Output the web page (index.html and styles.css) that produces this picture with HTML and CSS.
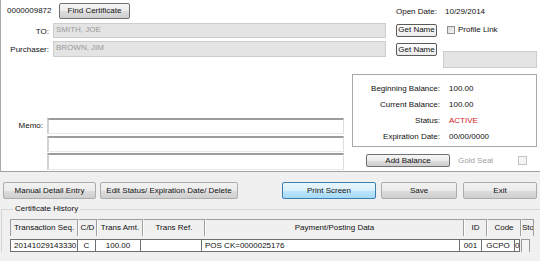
FILE: index.html
```html
<!DOCTYPE html>
<html>
<head>
<meta charset="utf-8">
<link rel="stylesheet" href="styles.css">
</head>
<body>
<div class="top">
  <div class="sec-a">
    <div class="left-a">
      <div class="row r1"><span class="certno">0000009872</span><button class="btn btn-find">Find Certificate</button></div>
      <div class="row r2"><span class="lbl">TO:</span><div class="dis">SMITH, JOE</div></div>
      <div class="row r3"><span class="lbl">Purchaser:</span><div class="dis">BROWN, JIM</div></div>
    </div>
    <div class="right-a">
      <div class="od-row"><span class="od-lbl">Open Date:</span><span>10/29/2014</span></div>
      <div class="gn-row"><button class="gn">Get Name</button><span class="chk"></span><span class="chk-lbl">Profile Link</span></div>
      <div class="gn-row2"><button class="gn">Get Name</button><div class="gray-in"></div></div>
    </div>
  </div>
  <div class="sec-b">
    <div class="memo">
      <span class="memo-lbl">Memo:</span>
      <div class="memo-ins">
        <div class="mi"></div>
        <div class="mi mi2"></div>
        <div class="mi mi3"></div>
      </div>
    </div>
    <div class="bal-col">
      <div class="bal-box">
        <div class="bal-row"><span class="bl">Beginning Balance:</span><span class="bv">100.00</span></div>
        <div class="bal-row"><span class="bl">Current Balance:</span><span class="bv">100.00</span></div>
        <div class="bal-row"><span class="bl">Status:</span><span class="bv red">ACTIVE</span></div>
        <div class="bal-row"><span class="bl">Expiration Date:</span><span class="bv">00/00/0000</span></div>
      </div>
      <div class="add-row"><button class="btn btn-add">Add Balance</button><span class="gold">Gold Seal</span><span class="chk chk-dis"></span></div>
    </div>
  </div>
</div>
<div class="bottom">
  <div class="btn-row">
    <button class="wbtn w1">Manual Detail Entry</button>
    <button class="wbtn w2">Edit Status/ Expiration Date/ Delete</button>
    <button class="wbtn w3 focus">Print Screen</button>
    <button class="wbtn w4">Save</button>
    <button class="wbtn w5">Exit</button>
  </div>
  <fieldset class="hist">
    <legend>Certificate History</legend>
    <div class="grid">
      <div class="ghead">
        <div class="hc c1 left">Transaction Seq.</div>
        <div class="hc c2">C/D</div>
        <div class="hc c3">Trans Amt.</div>
        <div class="hc c4">Trans Ref.</div>
        <div class="hc c5">Payment/Posting Data</div>
        <div class="hc c6">ID</div>
        <div class="hc c7">Code</div>
        <div class="hc c8 left">Sto</div>
      </div>
      <div class="gbody">
        <div class="drow">
          <div class="dc c1 left">20141029143330</div>
          <div class="dc c2">C</div>
          <div class="dc c3">100.00</div>
          <div class="dc c4"></div>
          <div class="dc c5 left">POS CK=0000025176</div>
          <div class="dc c6">001</div>
          <div class="dc c7">GCPO</div>
          <div class="dc c9 left">0</div>
        </div>
        <div class="vscroll"><span class="arrow"></span></div>
      </div>
    </div>
  </fieldset>
</div>
</body>
</html>
```

FILE: styles.css
```css
html, body {
  margin: 0;
  padding: 0;
}
body {
  width: 540px;
  height: 261px;
  overflow: hidden;
  background: #f0f0f0;
  font-family: "Liberation Sans", Arial, sans-serif;
  font-size: 8px;
  line-height: 10px;
  color: #111;
}
button {
  font: inherit;
  color: inherit;
  padding: 0;
  margin: 0;
  box-sizing: border-box;
  cursor: default;
}

/* ---------- top white panel ---------- */
.top {
  height: 171px;
  background: #fff;
  border-left: 1px solid #a9a9a9;
  border-bottom: 1px solid #a0a0a0;
}
.sec-a {
  display: flex;
  height: 70px;
}
.left-a {
  width: 389px;
}
.row {
  display: flex;
  align-items: center;
}
.r1 {
  margin-top: 3px;
  height: 16px;
}
.certno {
  margin-left: 6px;
  width: 52px;
}
.btn {
  border: 1px solid #707070;
  border-radius: 2px;
  background: linear-gradient(#f6f6f6, #ebebeb 50%, #dddddd 50%, #cfcfcf);
  text-align: center;
}
.btn-find {
  width: 71px;
  height: 16px;
}
.r2 {
  margin-top: 4px;
  height: 15px;
}
.r3 {
  margin-top: 3px;
  height: 16px;
}
.lbl {
  width: 48px;
  margin-right: 4px;
  text-align: right;
  padding-top: 2px;
}
.dis {
  width: 333px;
  height: 100%;
  box-sizing: border-box;
  background: #e4e4e4;
  border: 1px solid #cdcdcd;
  color: #9a9a9a;
  padding: 1px 0 0 2px;
}
.right-a {
  margin-left: 6px;
  width: 144px;
}
.od-row {
  margin-top: 7px;
  display: flex;
}
.od-lbl {
  width: 49px;
}
.gn-row {
  margin-top: 7px;
  display: flex;
  align-items: center;
  height: 12px;
}
.gn {
  width: 41px;
  height: 13px;
  border: 1px solid #5a5a5a;
  border-radius: 2px;
  background: linear-gradient(#fdfdfd, #ececec);
  line-height: 10px;
}
.chk {
  width: 8px;
  height: 8px;
  box-sizing: border-box;
  border: 1px solid #8f8f8f;
  background: linear-gradient(135deg, #d8d8d8, #f6f6f6);
  margin-left: 10px;
}
.chk-lbl {
  margin-left: 3px;
}
.gn-row2 {
  margin-top: 7px;
  display: flex;
  align-items: flex-start;
}
.gray-in {
  margin-left: 6px;
  margin-top: 8px;
  width: 94px;
  height: 17px;
  box-sizing: border-box;
  background: #e4e4e4;
  border: 1px solid #cdcdcd;
}

.sec-b {
  display: flex;
  height: 101px;
}
.memo {
  width: 343px;
  display: flex;
  align-items: flex-start;
  padding-top: 48px;
}
.memo-lbl {
  width: 42px;
  margin-right: 4px;
  text-align: right;
  line-height: 16px;
}
.memo-ins {
  width: 297px;
}
.mi {
  height: 16px;
  box-sizing: border-box;
  background: #fff;
  border-top: 2px solid #9c9c9c;
  border-left: 2px solid #d2d2d2;
  border-right: 1px solid #dedede;
  border-bottom: 1px solid #e8e8e8;
}
.mi2 {
  margin-top: 2px;
}
.mi3 {
  margin-top: 1px;
  height: 17px;
}
.bal-col {
  margin-left: 8px;
  width: 185px;
}
.bal-box {
  margin-top: 4px;
  height: 73px;
  box-sizing: border-box;
  border: 1px solid #a8a8a8;
  padding-top: 6px;
}
.bal-row {
  display: flex;
  height: 16px;
  line-height: 16px;
}
.bl {
  width: 87px;
  text-align: right;
}
.bv {
  margin-left: 9px;
}
.red {
  color: #d1232a;
}
.add-row {
  margin-top: 7px;
  display: flex;
  align-items: center;
  height: 13px;
}
.btn-add {
  margin-left: 14px;
  width: 84px;
  height: 13px;
  line-height: 10px;
}
.gold {
  margin-left: 8px;
  width: 60px;
  color: #a0a0a0;
}
.chk-dis {
  margin-left: 0;
  width: 9px;
  height: 9px;
  border-color: #c4c4c4;
  background: #f4f4f4;
}

/* ---------- bottom gray area ---------- */
.btn-row {
  display: flex;
  padding: 10px 0 0 3px;
}
.wbtn {
  height: 17px;
  border: 1px solid #acacac;
  border-radius: 2px;
  background: linear-gradient(#f2f2f2, #ebebeb 50%, #dddddd 50%, #cfcfcf);
  text-align: center;
}
.w1 { width: 93px; }
.w2 { width: 138px; margin-left: 4px; }
.w3 { width: 94px; margin-left: 44px; }
.w4 { width: 76px; margin-left: 5px; }
.w5 { width: 74px; margin-left: 6px; }
.focus {
  border-color: #3c7fb1;
  background: linear-gradient(#eaf6fd, #d9f0fc 50%, #bee6fd 50%, #a7d9f5);
}

.hist {
  margin: 5px 0 0 1px;
  padding: 5px 0 0 8px;
  border: 1px solid #d5d5d5;
  border-right: none;
  border-bottom: none;
  min-width: 0;
  height: 42px;
  overflow: hidden;
}
.hist legend {
  padding: 0 2px;
  margin-left: 3px;
  line-height: 10px;
}
.grid {
  width: 525px;
}
.ghead {
  display: flex;
  height: 17px;
}
.hc {
  box-sizing: border-box;
  height: 17px;
  line-height: 16px;
  border-top: 1px solid #9f9f9f;
  border-right: 1px solid #9f9f9f;
  border-left: 1px solid #fdfdfd;
  background: #f0f0f0;
  text-align: center;
  white-space: nowrap;
  overflow: hidden;
}
.ghead .c1 {
  border-left: 1px solid #9f9f9f;
}
.c1 { width: 68px; }
.c2 { width: 19px; }
.c3 { width: 46px; }
.c4 { width: 62px; }
.c5 { width: 259px; }
.c6 { width: 23px; }
.c7 { width: 34px; }
.c8 { width: 13px; }
.c9 { width: 6px; }
.gbody {
  margin-top: 3px;
  display: flex;
  align-items: flex-start;
  height: 22px;
  border-left: 1px solid #9f9f9f;
  box-sizing: border-box;
  width: 525px;
}
.drow {
  display: flex;
}
.dc {
  box-sizing: border-box;
  height: 13px;
  line-height: 11px;
  background: #fff;
  border: 1px solid #6e6e6e;
  margin-left: -1px;
  text-align: center;
  white-space: nowrap;
  overflow: hidden;
}
.hc.left, .dc.left {
  text-align: left;
  padding-left: 3px;
}
.hc.c8, .dc.c9 {
  padding-left: 0;
}
.vscroll {
  width: 9px;
  height: 22px;
  box-sizing: border-box;
  border: 1px solid #9a9a9a;
  border-bottom: none;
  background: #f4f4f4;
  display: flex;
  justify-content: center;
  padding-top: 12px;
  margin-left: 1px;
}
.arrow {
  width: 0;
  height: 0;
  border-left: 2px solid transparent;
  border-right: 2px solid transparent;
  border-bottom: 2px solid #222;
}
```
